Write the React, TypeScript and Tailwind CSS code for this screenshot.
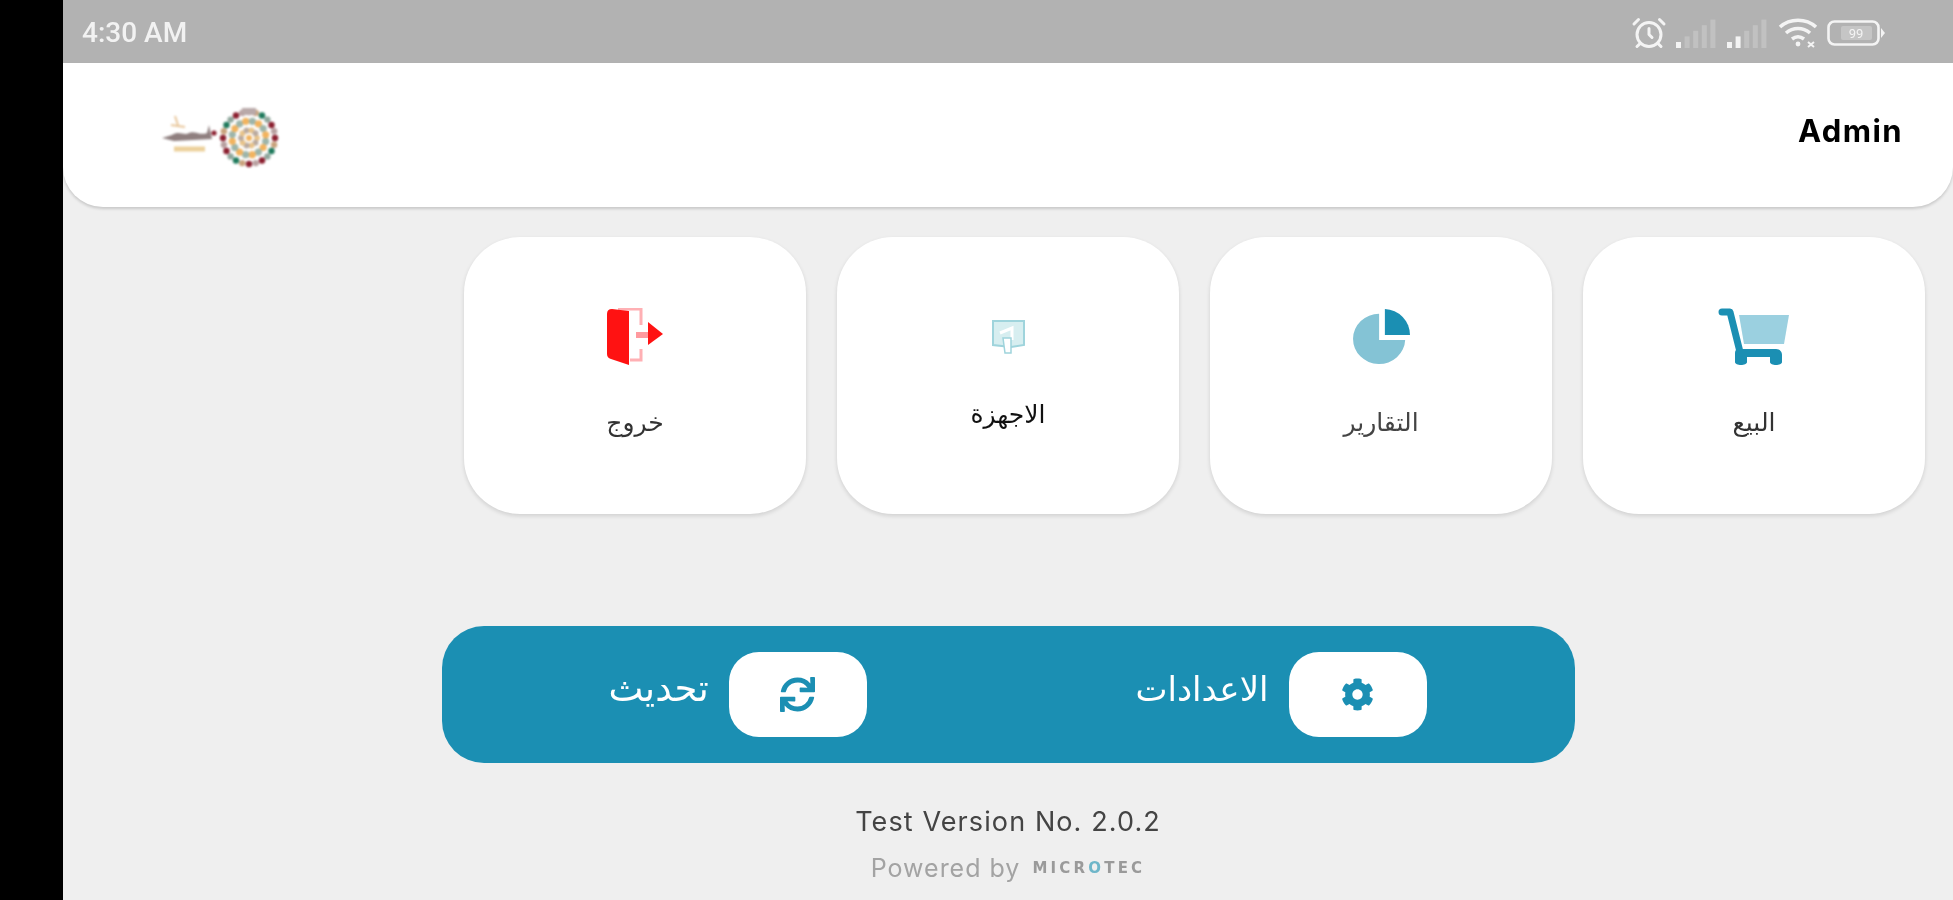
import React from "react";
import { AlarmClock } from "lucide-react";
import { FaCog, FaSync } from "react-icons/fa";

const TEAL = "#1b8fb3";

const SignalBars = ({ level }: { level: number }) => (
  <svg width="42" height="30" viewBox="0 0 42 30" aria-hidden>
    {[0, 1, 2, 3, 4].map((i) => (
      <rect
        key={i}
        x={i * 8.6}
        y={24 - i * 5.6}
        width="5"
        height={6 + i * 5.6}
        fill="#ffffff"
        opacity={i < level ? 0.85 : 0.2}
      />
    ))}
  </svg>
);

const WifiIcon = () => (
  <svg width="40" height="30" viewBox="0 0 40 30" fill="none" stroke="#f4f4f4" strokeWidth="3.6" aria-hidden>
    <path d="M2 9 C12 0 28 0 38 9" />
    <path d="M8 15 C15 9 25 9 32 15" />
    <path d="M14 21 C18 18 22 18 26 21" />
    <circle cx="20" cy="26" r="2.4" fill="#f4f4f4" stroke="none" />
    <path d="M30 24 L36 29 M36 24 L30 29" strokeWidth="2" />
  </svg>
);

const BatteryIcon = () => (
  <svg width="58" height="26" viewBox="0 0 58 26" fill="none" aria-hidden>
    <rect x="1.5" y="1.5" width="50" height="23" rx="6" stroke="#f4f4f4" strokeWidth="2.6" />
    <rect x="14" y="6" width="31" height="14" rx="2" fill="#ffffff" opacity="0.25" />
    <text x="29" y="18" textAnchor="middle" fontSize="13" fill="#f4f4f4" fontFamily="Roboto, sans-serif">
      99
    </text>
    <path d="M54 8 L58 13 L54 18 Z" fill="#f4f4f4" />
  </svg>
);

const MANDALA_OUTER = ["#8b1f2f", "#c9a27c", "#1f7a5c", "#8fa79c", "#8b1f2f", "#b8a0a0"];

const BrandLogo = () => (
  <svg width="120" height="64" viewBox="0 0 120 64" className="blur-[0.8px]" aria-hidden>
    {/* calligraphy swash */}
    <path d="M0 32 L10 29 C17 24 22 30 27 27 C32 24 38 30 45 27 L47 19 L50 33 L12 35 Z" fill="#8f7f7f" />
    <path d="M13 10 L16 19 M9 19 L23 21" stroke="#e8c69a" strokeWidth="2" />
    <path d="M12 43 H43" stroke="#ecd09a" strokeWidth="5" />
    <circle cx="52" cy="27" r="2.6" fill="#8b1f2f" />
    {/* mandala */}
    {Array.from({ length: 24 }).map((_, i) => {
      const a = (i / 24) * Math.PI * 2;
      return (
        <circle
          key={i}
          cx={87 + Math.cos(a) * 26}
          cy={32 + Math.sin(a) * 26}
          r="3.2"
          fill={MANDALA_OUTER[i % MANDALA_OUTER.length]}
        />
      );
    })}
    {Array.from({ length: 16 }).map((_, i) => {
      const a = (i / 16) * Math.PI * 2 + 0.2;
      return (
        <circle
          key={i}
          cx={87 + Math.cos(a) * 17}
          cy={32 + Math.sin(a) * 17}
          r="3.6"
          fill={i % 2 ? "#f2b35e" : "#9db5aa"}
        />
      );
    })}
    {Array.from({ length: 10 }).map((_, i) => {
      const a = (i / 10) * Math.PI * 2;
      return (
        <circle
          key={i}
          cx={87 + Math.cos(a) * 8}
          cy={32 + Math.sin(a) * 8}
          r="3"
          fill={i % 2 ? "#b9aaa0" : "#e9c48a"}
        />
      );
    })}
    <circle cx="87" cy="32" r="3" fill="#f2b35e" />
    <rect x="80" y="2" width="14" height="7" fill="#b9a9a9" />
  </svg>
);

const CartIcon = () => (
  <svg width="72" height="58" viewBox="0 0 72 58" aria-hidden>
    <path d="M21 7 H71 L66 36 H26 Z" fill="#9bd0e0" />
    <path
      d="M4 4 H12 L22 44"
      fill="none"
      stroke={TEAL}
      strokeWidth="7"
      strokeLinecap="round"
      strokeLinejoin="round"
    />
    <path
      d="M20 41 H58 C62 41 64 44 64 47 V54 C64 58 52 58 52 54 V49 H29 V54 C29 58 17 58 17 54 V45 C17 43 18 41 20 41 Z"
      fill={TEAL}
    />
  </svg>
);

const PieIcon = () => (
  <svg width="58" height="56" viewBox="0 0 60 58" className="ml-[2px]" aria-hidden>
    <path d="M27 5 V32 H54 A27 26 0 1 1 27 5 Z" fill="#84c3d5" />
    <path d="M33 0 A27 27 0 0 1 59 27 H33 Z" fill={TEAL} />
  </svg>
);

const DevicesIcon = () => (
  <svg width="35" height="34" viewBox="0 0 35 34" fill="none" aria-hidden>
    <path d="M2 1 H33 V25 L20 27 L2 25 Z" fill="#d7eef0" stroke="#9fd4dc" strokeWidth="2" />
    <path d="M9 13 L21 8 V20" stroke="#ffffff" strokeWidth="3" />
    <path d="M12 18 H20 V33 H14 Z" fill="#ffffff" stroke="#9fd4dc" strokeWidth="1.5" />
  </svg>
);

const DoorIcon = () => (
  <svg width="58" height="58" viewBox="0 0 58 58" aria-hidden>
    <path d="M12 1 H35 V17 M35 41 V52 H24" fill="none" stroke="#ffb0b4" strokeWidth="3" />
    <path d="M1 6 Q1 1 6 1 L23 3 V57 L5 51 Q1 50 1 46 Z" fill="#ff1212" />
    <path d="M30 24 H44 V30 H30 Z" fill="#ff9a9f" />
    <path d="M42 14 L57 26 L42 37 Z" fill="#ff1212" />
  </svg>
);

type MenuCardProps = {
  label: string;
  labelGap: string;
  labelColor: string;
  icon: React.ReactNode;
};

const MenuCard = ({ label, labelGap, labelColor, icon }: MenuCardProps) => (
  <div className="flex h-[277px] w-[342px] flex-col items-center rounded-[56px] bg-white pt-[71px] shadow-[0_2px_4px_rgba(0,0,0,0.13)]">
    <div className="flex h-[58px] items-center justify-center">{icon}</div>
    <p dir="rtl" className={`text-[25px] leading-[26px] ${labelGap} ${labelColor}`}>
      {label}
    </p>
  </div>
);

type BarActionProps = {
  label: string;
  textSize: string;
  icon: React.ReactNode;
};

const BarAction = ({ label, textSize, icon }: BarActionProps) => (
  <div className="flex items-center gap-5">
    <span dir="rtl" className={`-mt-3 leading-[40px] text-white ${textSize}`}>
      {label}
    </span>
    <div className="flex h-[85px] w-[138px] items-center justify-center rounded-[30px] bg-white">
      {icon}
    </div>
  </div>
);

const App = () => {
  return (
    <div className="flex h-screen w-full overflow-hidden bg-black font-['DejaVu_Sans',sans-serif] blur-[0.7px]">
      <div className="w-[63px] shrink-0 bg-black" />

      <div className="flex min-w-0 flex-1 flex-col bg-[#efefef]">
        <div className="flex h-[63px] shrink-0 items-center justify-between bg-[#b2b2b2] pl-[19px] pr-[68px] pt-[3px]">
          <span className="font-['Roboto',sans-serif] text-[28px] font-medium text-[#f2f2f2]">4:30 AM</span>
          <div className="flex items-center gap-[9px]">
            <AlarmClock size={36} color="#f4f4f4" strokeWidth={2} />
            <SignalBars level={1} />
            <SignalBars level={2} />
            <WifiIcon />
            <BatteryIcon />
          </div>
        </div>

        <div className="flex h-[144px] shrink-0 items-start justify-between rounded-b-[40px] bg-white pl-[99px] pr-[50px] shadow-[0_2px_3px_rgba(0,0,0,0.16)]">
          <div className="mt-[43px]">
            <BrandLogo />
          </div>
          <span className="mt-[47px] font-['Inter',sans-serif] text-[31px] font-bold leading-[42px] tracking-[1.4px] text-black">
            Admin
          </span>
        </div>

        <div className="mt-[30px] flex flex-row-reverse gap-[31px] pr-[28px]">
          <MenuCard label="البيع" labelGap="mt-[44px]" labelColor="text-[#333333]" icon={<CartIcon />} />
          <MenuCard label="التقارير" labelGap="mt-[44px]" labelColor="text-[#444444]" icon={<PieIcon />} />
          <MenuCard label="الاجهزة" labelGap="mt-[36px]" labelColor="text-[#111111]" icon={<DevicesIcon />} />
          <MenuCard label="خروج" labelGap="mt-[44px]" labelColor="text-[#333333]" icon={<DoorIcon />} />
        </div>

        <div className="mx-auto mt-[112px] flex h-[137px] w-[1133px] items-center justify-between rounded-[42px] bg-[#1b8fb3] pl-[167px] pr-[148px]">
          <BarAction label="تحديث" textSize="text-[37px]" icon={<FaSync size={35} color={TEAL} />} />
          <BarAction label="الاعدادات" textSize="text-[34px]" icon={<FaCog size={33} color={TEAL} />} />
        </div>

        <p className="mt-[43px] text-center font-['Inter',sans-serif] text-[27px] leading-[32px] tracking-[1.1px] text-[#444444]">
          Test Version No. 2.0.2
        </p>
        <div className="mt-[16px] flex items-center justify-center gap-[12px] font-['Inter',sans-serif] text-[25px] leading-[28px] tracking-[1px] text-[#a3a3a3]">
          <span>Powered by</span>
          <span className="font-['DejaVu_Sans',sans-serif] text-[15px] font-bold tracking-[3.2px] text-[#9a9a9a]">
            MICR<span className="text-[#6fb6c9]">O</span>TEC
          </span>
        </div>
      </div>
    </div>
  );
};

export default App;
